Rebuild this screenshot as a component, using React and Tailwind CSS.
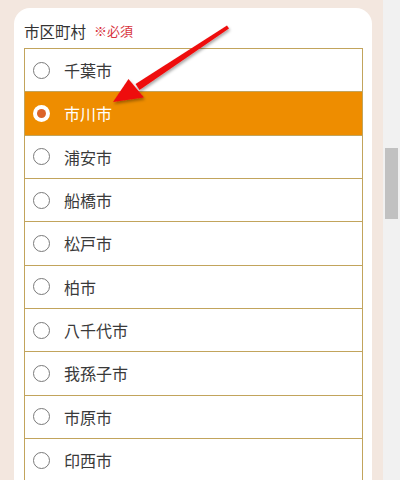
import React from 'react';

const cities = ['千葉市', '市川市', '浦安市', '船橋市', '松戸市', '柏市', '八千代市', '我孫子市', '市原市', '印西市'];

function Radio({ checked }) {
  if (checked) {
    return (
      <span className="flex h-[17px] w-[17px] items-center justify-center rounded-full bg-white">
        <span className="h-[9px] w-[9px] rounded-full bg-[#dc6429]" />
      </span>
    );
  }
  return <span className="h-[17px] w-[17px] rounded-full border border-[#7a7a7a] bg-white" />;
}

export default function App() {
  const selected = '市川市';

  return (
    <div
      className="relative flex h-[480px] w-[400px] overflow-hidden bg-[#f3e7df]"
      style={{ fontFamily: '"Noto Sans CJK JP", "Noto Sans", sans-serif' }}
    >
      {/* メイン */}
      <div className="flex-1 pl-[14px] pr-[11px] pt-[8px]">
        <div className="h-full rounded-t-2xl bg-white pl-[10px] pr-[9px] pt-[13px]">
          <div className="mb-[7px] flex items-center gap-[8px] leading-[20px]">
            <span className="text-[15.5px] text-[#333]">市区町村</span>
            <span className="text-[13px] text-[#d8323c]">※必須</span>
          </div>
          <ul className="border-x border-t border-[#c2a45c]">
            {cities.map((city) => {
              const isOn = city === selected;
              return (
                <li
                  key={city}
                  className={`flex h-[43.33px] items-center gap-[14px] border-b border-[#c2a45c] pl-[8px] text-[16px] ${
                    isOn ? 'bg-[#ee8d00] text-white' : 'bg-white text-[#3a3a3a]'
                  }`}
                >
                  <Radio checked={isOn} />
                  {city}
                </li>
              );
            })}
          </ul>
        </div>
      </div>

      {/* スクロールバー */}
      <div className="w-[17px] bg-[#f1f1f1] px-[2px]">
        <div className="mt-[148px] h-[71px] bg-[#c1c1c1]" />
      </div>

      {/* 矢印 */}
      <svg className="pointer-events-none absolute left-0 top-0" width="400" height="480">
        <defs>
          <filter id="sh" x="-20%" y="-20%" width="140%" height="140%">
            <feDropShadow dx="1" dy="2" stdDeviation="1.5" floodColor="#000" floodOpacity="0.35" />
          </filter>
        </defs>
        <g filter="url(#sh)" fill="#ee1111">
          <polygon points="229,28.5 227,25.5 135.5,84 139.5,90" />
          <polygon points="113,102 128.5,79 144,97.5" />
        </g>
      </svg>
    </div>
  );
}
